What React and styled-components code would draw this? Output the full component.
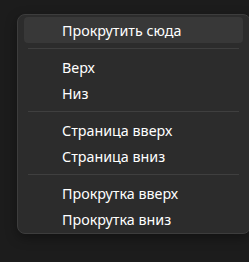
import styled, { createGlobalStyle } from 'styled-components'

const GlobalStyle = createGlobalStyle`
    html, body {
        margin: 0;
        padding: 0;
        background: #1c1c1c;
        overflow: hidden;
    }
`

const items = [
    ['Прокрутить сюда'],
    ['Верх', 'Низ'],
    ['Страница вверх', 'Страница вниз'],
    ['Прокрутка вверх', 'Прокрутка вниз'],
]

export default function App() {
    return (
        <>
            <GlobalStyle />
            <Page>
                <Menu>
                    {items.map((group, i) => (
                        <div key={i}>
                            {i > 0 && <Separator />}
                            {group.map((label, j) => (
                                <Item key={label} active={i === 0 && j === 0}>{label}</Item>
                            ))}
                        </div>
                    ))}
                </Menu>
            </Page>
        </>
    )
}

const Page = styled.div`
    width: 249px;
    height: 262px;
    padding: 14px 0 0 17px;
    box-sizing: border-box;
`

const Menu = styled.div`
    width: 234px;
    box-sizing: border-box;
    background: #2c2c2c;
    border: 1px solid #3d3d3d;
    border-radius: 8px;
    padding: 2px 7px 1px 6px;
    box-shadow: 0 4px 12px rgba(0, 0, 0, 0.35);
`

const Item = styled.div`
    height: 26px;
    display: flex;
    align-items: center;
    padding-left: 38px;
    border-radius: 4px;
    background: ${p => p.active ? '#383838' : 'transparent'};
    font-family: 'Noto Sans', sans-serif;
    font-size: 14.3px;
    color: #ffffff;
    white-space: nowrap;
`

const Separator = styled.div`
    height: 1px;
    margin: 5px 4px;
    background: #3f3f3f;
`
